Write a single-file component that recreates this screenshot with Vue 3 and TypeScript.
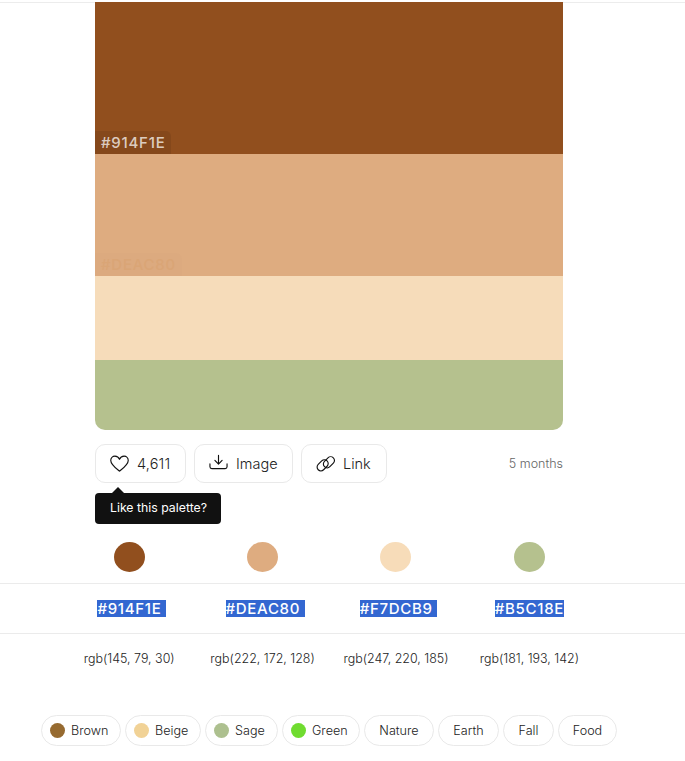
<script setup lang="ts">
interface Swatch {
  hex: string
  rgb: string
  trailing: boolean
}

interface Tag {
  name: string
  color?: string
}

const swatches: Swatch[] = [
  { hex: '#914F1E', rgb: 'rgb(145, 79, 30)', trailing: true },
  { hex: '#DEAC80', rgb: 'rgb(222, 172, 128)', trailing: true },
  { hex: '#F7DCB9', rgb: 'rgb(247, 220, 185)', trailing: true },
  { hex: '#B5C18E', rgb: 'rgb(181, 193, 142)', trailing: false },
]

const tags: Tag[] = [
  { name: 'Brown', color: '#966a30' },
  { name: 'Beige', color: '#f1d296' },
  { name: 'Sage', color: '#adc08f' },
  { name: 'Green', color: '#70dc30' },
  { name: 'Nature' },
  { name: 'Earth' },
  { name: 'Fall' },
  { name: 'Food' },
]
</script>

<template>
  <main class="page">
    <section class="palette">
      <div class="band band-one"><span class="code">#914F1E</span></div>
      <div class="band band-two"><span class="code faint">#DEAC80</span></div>
      <div class="band band-three"></div>
      <div class="band band-four"></div>
    </section>

    <section class="actions">
      <button class="action like">
        <svg class="icon" viewBox="0 0 20 20">
          <path d="M10 18 C8.6 16.6 0.8 11.6 0.8 6.8 C0.8 4.1 2.8 2.2 5.2 2.2 C7.6 2.2 9.2 3.6 10 5.6 C10.8 3.6 12.4 2.2 14.8 2.2 C17.2 2.2 19.2 4.1 19.2 6.8 C19.2 11.6 11.4 16.6 10 18 Z" />
        </svg>
        <span>4,611</span>
        <span class="tooltip">Like this palette?</span>
      </button>
      <button class="action image">
        <svg class="icon" viewBox="0 0 20 20">
          <path d="M10 1.5 V10.4 M6.2 6.8 L10 10.6 L13.8 6.8 M1 10.4 V13.4 Q1 15.4 3 15.4 H17 Q19 15.4 19 13.4 V10.4" />
        </svg>
        <span>Image</span>
      </button>
      <button class="action link">
        <svg class="icon" viewBox="0 0 20 20">
          <rect x="-6.6" y="-4" width="13.2" height="8" rx="4" transform="translate(7 11.9) rotate(-45)" />
          <rect x="-6.6" y="-4" width="13.2" height="8" rx="4" transform="translate(13.6 8.7) rotate(-45)" />
        </svg>
        <span>Link</span>
      </button>
      <span class="date">5 months</span>
    </section>

    <section class="table">
      <div class="row dots">
        <div v-for="s in swatches" :key="s.hex" class="cell">
          <span class="dot" :style="{ background: s.hex }"></span>
        </div>
      </div>
      <div class="row codes">
        <div v-for="s in swatches" :key="s.hex" class="cell">
          <span class="selected" :class="{ trailing: s.trailing }">{{ s.hex }}</span>
        </div>
      </div>
      <div class="row values">
        <div v-for="s in swatches" :key="s.hex" class="cell">{{ s.rgb }}</div>
      </div>
    </section>

    <nav class="tags">
      <a v-for="t in tags" :key="t.name" class="tag" :class="{ colored: t.color }">
        <i v-if="t.color" class="tag-dot" :style="{ background: t.color }"></i>
        <span>{{ t.name }}</span>
      </a>
    </nav>
  </main>
</template>

<style>
body {
  background: #fff;
}
</style>

<style scoped>
.page {
  box-sizing: border-box;
  height: 761px;
  overflow: hidden;
  padding-top: 2px;
  font-family: Inter, "Liberation Sans", sans-serif;
  color: #222;
  background: linear-gradient(#ececec, #ececec) 0 2px / 100% 1px no-repeat;
}

.palette {
  width: 468px;
  height: 428px;
  margin-left: 95px;
  display: flex;
  flex-direction: column;
  border-radius: 0 0 10px 10px;
  overflow: hidden;
}

.band {
  display: flex;
  align-items: flex-end;
}

.band-one { height: 152px; background: #914f1e; }
.band-two { height: 122px; background: #deac80; }
.band-three { height: 84px; background: #f6dcba; }
.band-four { height: 70px; background: #b5c18e; }

.code {
  box-sizing: border-box;
  height: 23px;
  padding: 0 6px;
  border-radius: 0 5px 0 0;
  background: rgba(0, 0, 0, 0.08);
  color: rgba(255, 255, 255, 0.74);
  font-size: 15px;
  font-weight: 500;
  line-height: 24px;
  letter-spacing: 0.75px;
}

.code.faint {
  line-height: 23px;
  background: rgba(0, 0, 0, 0.008);
  color: #daa576;
}

.actions {
  width: 468px;
  margin: 14px 0 0 95px;
  display: flex;
  align-items: center;
  gap: 8px;
}

.action {
  position: relative;
  box-sizing: border-box;
  height: 39px;
  display: flex;
  align-items: center;
  gap: 8px;
  padding: 0 0 0 14px;
  border: 1px solid #e9e9e9;
  border-radius: 10px;
  background: #fff;
  color: #222;
  font-family: inherit;
  font-size: 14.5px;
  font-weight: 300;
}

.like { width: 91px; }
.image { width: 99px; }
.link { width: 86px; }

.like > span:not(.tooltip) {
  letter-spacing: 0.15px;
}

.icon {
  width: 19px;
  height: 19px;
  flex: none;
  fill: none;
  stroke: #111;
  stroke-width: 1.2;
  stroke-linecap: round;
  stroke-linejoin: round;
}

.tooltip {
  position: absolute;
  top: 48px;
  left: -1px;
  box-sizing: border-box;
  width: 126px;
  height: 31px;
  padding-left: 1px;
  border-radius: 4px;
  background: #111;
  color: #fff;
  font-size: 12.3px;
  font-weight: 400;
  line-height: 30px;
  text-align: center;
  white-space: nowrap;
}

.tooltip::before {
  content: "";
  position: absolute;
  top: -6px;
  left: 17px;
  border: 6px solid transparent;
  border-top: 0;
  border-bottom-color: #111;
}

.date {
  margin-left: auto;
  color: #666;
  font-size: 12.5px;
  font-weight: 300;
}

.table {
  margin-top: 48px;
}

.row {
  box-sizing: border-box;
  display: grid;
  grid-template-columns: repeat(4, 133.4px);
  padding-left: 62.5px;
  align-items: center;
  border-bottom: 1px solid #ebebeb;
}

.cell {
  text-align: center;
}

.dots { height: 53px; }
.codes { height: 50px; padding-top: 2px; }
.values { height: 50px; padding-bottom: 2px; border-bottom: 0; font-size: 12.45px; font-weight: 300; white-space: nowrap; }

.dot {
  display: block;
  width: 31px;
  height: 30px;
  margin: -1px auto 0;
  border-radius: 50%;
}

.dots .cell {
  align-self: start;
  padding-top: 12px;
}

.selected {
  display: inline-block;
  height: 17px;
  background: #3367d1;
  color: #fff;
  font-size: 15px;
  font-weight: 500;
  line-height: 17px;
  letter-spacing: 0.7px;
  vertical-align: top;
}

.trailing {
  padding-right: 4.5px;
  margin-left: 5px;
}

.tags {
  display: grid;
  grid-template-columns: 80px 76px 73px 78px 70px 61px 51px 59px;
  gap: 4px;
  margin: 31px 0 0 41px;
}

.tag {
  box-sizing: border-box;
  height: 31px;
  display: flex;
  align-items: center;
  justify-content: center;
  gap: 6px;
  border: 1px solid #e9e9e9;
  border-radius: 16px;
  font-size: 12.6px;
  font-weight: 300;
}

.tag.colored {
  justify-content: flex-start;
  padding-left: 8px;
}

.tag-dot {
  width: 15px;
  height: 15px;
  flex: none;
  border-radius: 50%;
}
</style>
